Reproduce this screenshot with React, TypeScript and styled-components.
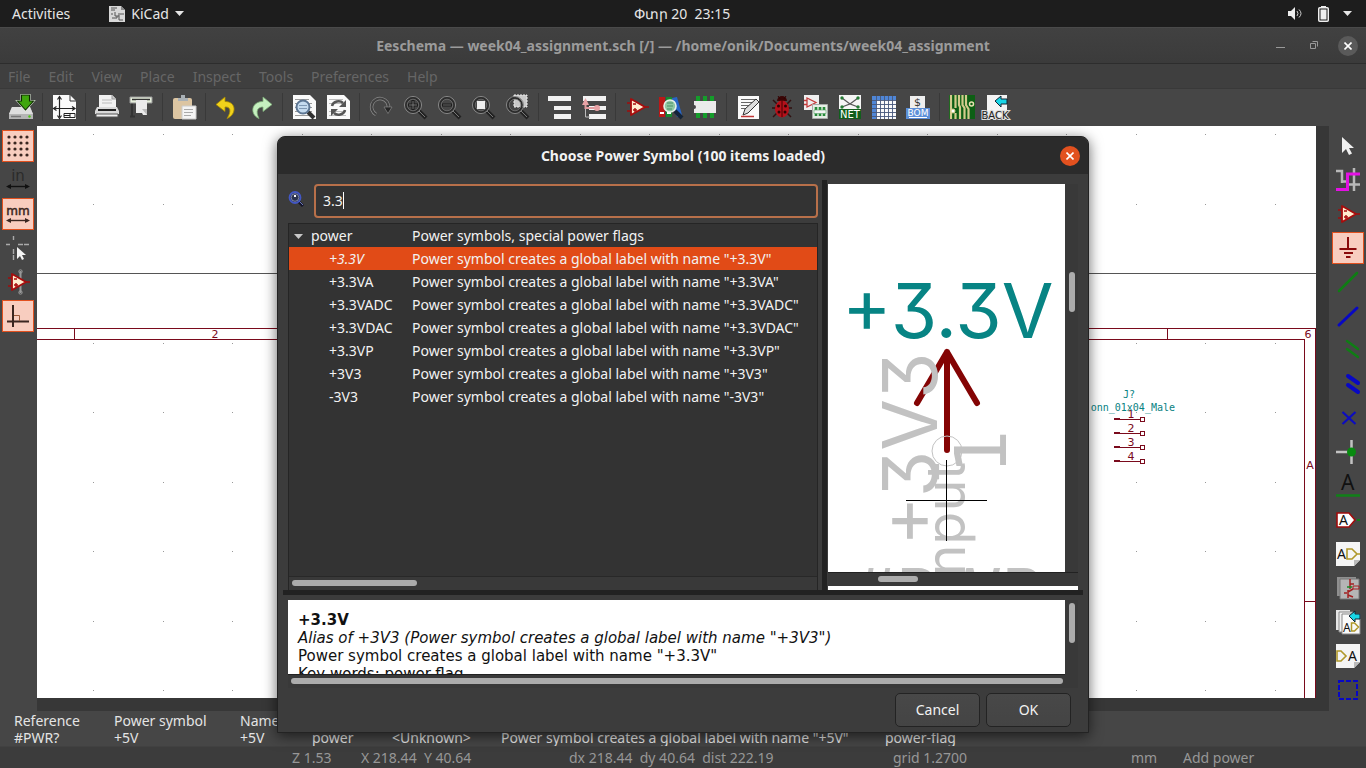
import React from "react";
import styled, { createGlobalStyle } from "styled-components";

const UI = '"Noto Sans", "Open Sans", sans-serif';
const DOC = '"DejaVu Sans", sans-serif';
const MONO = '"DejaVu Sans Mono", monospace';

const Global = createGlobalStyle`
  * { box-sizing: border-box; }
  body { margin: 0; background: #464646; font-family: ${UI}; font-size: 14px; }
  button, input { font: inherit; color: inherit; }
  svg { display: block; }
`;

const Page = styled.div`
  position: relative;
  display: flex;
  flex-direction: column;
  min-height: 100vh;
  overflow: hidden;
`;

/* ---------- desktop bar ---------- */
const DesktopBar = styled.header`
  display: grid;
  grid-template-columns: 1fr auto 1fr;
  align-items: center;
  height: 27px;
  padding: 0 14px 0 12px;
  background: #1d1d1d;
  color: #e6e6e6;
`;
const BarGroup = styled.div<{ $end?: boolean; $gap: number }>`
  display: flex;
  align-items: center;
  gap: ${(p) => p.$gap}px;
  justify-content: ${(p) => (p.$end ? "flex-end" : "flex-start")};
`;
const BarButton = styled.button`
  display: flex;
  align-items: center;
  gap: 6px;
  padding: 0;
  border: 0;
  background: none;
`;

/* ---------- main window chrome ---------- */
const TitleBar = styled.div`
  display: grid;
  grid-template-columns: 1fr auto 1fr;
  align-items: center;
  height: 37px;
  padding: 0 8px;
  background: linear-gradient(#414141, #3b3b3b);
  border-top: 1px solid #4a4a4a;
  border-bottom: 1px solid #2d2d2d;
`;
const WindowTitle = styled.h1`
  grid-column: 2;
  margin: 0;
  font-size: 14px;
  font-weight: 700;
  line-height: 20px;
  color: #9b9b9b;
  white-space: nowrap;
`;
const WindowButtons = styled.div`
  display: flex;
  justify-content: flex-end;
  gap: 14px;
`;
const RoundButton = styled.button<{ $bg?: string }>`
  display: grid;
  place-items: center;
  width: 20px;
  height: 20px;
  padding: 0;
  border: 0;
  border-radius: 50%;
  background: ${(p) => p.$bg || "none"};
`;
const MenuBar = styled.nav`
  display: flex;
  gap: 18px;
  height: 25px;
  padding: 2px 8px 0;
  align-items: center;
  background: #3f3f3f;
  border-bottom: 1px solid #393939;
`;
const MenuItem = styled.button`
  padding: 0;
  border: 0;
  background: none;
  color: #666;
  line-height: 20px;
`;
const TopTools = styled.div`
  display: flex;
  align-items: center;
  height: 37px;
  padding: 0 0 1px 4px;
  background: #464646;
`;
const ToolButton = styled.button`
  display: grid;
  place-items: center;
  flex: none;
  width: 34px;
  height: 34px;
  padding: 0;
  border: 0;
  background: none;
`;
const Separator = styled.span`
  flex: none;
  width: 1px;
  height: 28px;
  margin: 0 4px;
  background: #393939;
`;
const Workspace = styled.main`
  display: flex;
  flex: 1;
  min-height: 585px;
`;
const SideTools = styled.div<{ $inset: number }>`
  display: flex;
  flex-direction: column;
  gap: 2px;
  flex: none;
  width: 37px;
  padding: 4px 0 0 ${(p) => p.$inset}px;
  background: #464646;
`;
const SideButton = styled.button<{ $on?: boolean }>`
  display: grid;
  place-items: center;
  flex: none;
  width: 32px;
  height: 32px;
  padding: 0;
  border: 1px solid ${(p) => (p.$on ? "#e2511f" : "transparent")};
  background: ${(p) => (p.$on ? "#f8cdbf" : "none")};
`;
const CanvasArea = styled.section`
  display: flex;
  flex: 1;
  min-width: 0;
  padding: 0 13px 13px 0;
  background: #373737;
`;
const Sheet = styled.svg`
  flex: 1;
  width: 100%;
  background: #fff;
`;

/* ---------- bottom panels ---------- */
const MessagePanel = styled.table`
  width: 100%;
  table-layout: fixed;
  border-collapse: collapse;
  background: #464646;
  color: #e4e4e4;
  height: 35px;
  th, td {
    padding: 0 0 0 14px;
    height: 17px;
    line-height: 17px;
    font-weight: 400;
    text-align: left;
    white-space: nowrap;
  }
  th {
    height: 18px;
    padding-top: 1px;
  }
`;
const Col = styled.col<{ $w?: number }>`
  width: ${(p) => (p.$w ? p.$w + "px" : "auto")};
`;
const StatusBar = styled.footer`
  display: grid;
  grid-template-columns: 69px 208px 324px 238px 52px 1fr;
  align-items: center;
  height: 22px;
  padding-left: 292px;
  background: #3c3c3c;
  border-top: 1px solid #414141;
  color: #979797;
  white-space: nowrap;
`;

/* ---------- dialog ---------- */
const Overlay = styled.div`
  position: absolute;
  inset: 0;
  display: flex;
  justify-content: center;
  align-items: flex-start;
  padding-top: 136px;
`;
const Dialog = styled.div`
  display: flex;
  flex-direction: column;
  width: 812px;
  border: 1px solid #232323;
  border-radius: 8px 8px 0 0;
  background: #3c3c3c;
  color: #f2f2f2;
  box-shadow: 0 3px 14px rgba(0, 0, 0, 0.6);
`;
const DialogTitle = styled.div`
  display: grid;
  grid-template-columns: 1fr auto 1fr;
  align-items: center;
  justify-items: end;
  height: 37px;
  padding: 0 8px;
  border-radius: 8px 8px 0 0;
  background: #2b2b2b;
  h2 {
    grid-column: 2;
    margin: 0;
    font-size: 14px;
    line-height: 20px;
    font-weight: 700;
  }
`;
const Panes = styled.div`
  display: flex;
  height: 416px;
  margin: 0 4px;
  padding: 6px 6px 0 5px;
`;
const LeftPane = styled.div`
  display: flex;
  flex-direction: column;
  flex: 1;
  min-width: 0;
  padding: 4px 0 0 1px;
`;
const SearchRow = styled.div`
  display: flex;
  align-items: center;
  gap: 10px;
  height: 34px;
  margin-bottom: 5px;
`;
const SearchLabel = styled.label`
  padding-bottom: 4px;
`;
const Field = styled.div`
  position: relative;
  flex: 1;
  height: 34px;
`;
const SearchInput = styled.input`
  width: 100%;
  height: 34px;
  padding: 0 7px 2px;
  border: 2px solid #b8704a;
  border-radius: 4px;
  outline: 0;
  background: #333;
  color: #f2f2f2;
`;
const Caret = styled.span`
  position: absolute;
  left: 29px;
  top: 8px;
  width: 1px;
  height: 17px;
  background: #fff;
`;
const TreeBox = styled.div`
  display: flex;
  flex-direction: column;
  flex: 1;
  border: 1px solid #252525;
  border-bottom: 0;
  background: #333;
  overflow: hidden;
`;
const Tree = styled.table`
  width: 100%;
  table-layout: fixed;
  border-collapse: collapse;
`;
const Row = styled.tr<{ $selected?: boolean }>`
  height: 23px;
  background: ${(p) => (p.$selected ? "#e14b17" : "transparent")};
`;
const Cell = styled.td<{ $indent?: number; $italic?: boolean }>`
  padding: 0 0 0 ${(p) => p.$indent || 0}px;
  line-height: 23px;
  white-space: nowrap;
  font-style: ${(p) => (p.$italic ? "italic" : "normal")};
  svg { display: inline-block; margin-right: 8px; vertical-align: 2px; }
`;
const Track = styled.div<{ $vertical?: boolean; $before: number }>`
  flex: none;
  display: flex;
  align-items: center;
  flex-direction: ${(p) => (p.$vertical ? "column" : "row")};
  ${(p) => (p.$vertical ? "width" : "height")}: 13px;
  padding: ${(p) => (p.$vertical ? `${p.$before}px 0 0` : `0 0 1px ${p.$before}px`)};
  background: #393939;
`;
const Thumb = styled.span<{ $len: number; $vertical?: boolean }>`
  width: ${(p) => (p.$vertical ? 6 : p.$len)}px;
  height: ${(p) => (p.$vertical ? p.$len : 6)}px;
  border-radius: 3px;
  background: #acacac;
`;
const TreeFoot = styled.div`
  margin-top: auto;
  border-top: 1px solid #282828;
`;
const Sash = styled.div`
  flex: none;
  width: 5px;
  margin: 0 1px 0 4px;
  background: #222;
`;
const RightPane = styled.div`
  display: flex;
  flex-direction: column;
  flex: none;
  width: 250px;
  padding-top: 4px;
`;
const Preview = styled.div`
  display: flex;
  height: 389px;
  border-bottom: 1px solid #222;
`;
const PreviewDrawing = styled.svg`
  flex: 1;
  background: #fff;
`;
const FootprintStrip = styled.div`
  flex: 1;
  background: #fff;
`;
const WideSash = styled.div`
  height: 5px;
  margin: 0 5px;
  background: #222;
`;
const DetailsBox = styled.div`
  margin: 5px 10px 0;
`;
const DetailsRow = styled.div`
  display: flex;
  height: 75px;
`;
const Details = styled.div`
  flex: 1;
  padding: 11px 10px 0;
  overflow: hidden;
  background: #fff;
  color: #111;
  font-family: ${DOC};
  font-size: 15px;
  line-height: 18px;
  white-space: nowrap;
  border-bottom: 1px solid #222;
  p { margin: 0; }
`;
const Actions = styled.div`
  display: flex;
  justify-content: flex-end;
  gap: 6px;
  padding: 5px 17px 5px;
`;
const ActionButton = styled.button`
  width: 85px;
  height: 34px;
  padding: 0 0 2px;
  border: 1px solid #232323;
  border-radius: 5px;
  background: linear-gradient(#484848, #444);
`;

/* ---------- icons ---------- */
const IconSvg = styled.svg`
  overflow: visible;
`;
const Icon = ({ children }: { children: React.ReactNode }) => (
  <IconSvg width="24" height="24" viewBox="0 0 24 24" fill="none" aria-hidden="true">{children}</IconSvg>
);
const SheetShape = () => <path d="M1 0h17l6 6v18H1z" fill="#fafafa" />;
const OpAmp = () => (
  <g>
    <path d="M2 8h4M2 16h4M20 12h4" stroke="#a00d0d" strokeWidth="1.600" />
    <path d="M6 4v16l14-8z" fill="#ffedcf" stroke="#a80c0c" strokeWidth="1.800" strokeLinejoin="round" />
    <path d="M8 9h3M8 15h4M10 13v4" stroke="#a80c0c" strokeWidth="1.400" />
  </g>
);
const Lens = ({ children }: { children?: React.ReactNode }) => (
  <g>
    <path d="M16 16l7 7" stroke="#222" strokeWidth="4" />
    <path d="M16 16l6 6" stroke="#777" strokeWidth="1" />
    <circle cx="10" cy="10" r="8.500" stroke="#8a8a8a" strokeWidth="1" />
    <circle cx="10" cy="10" r="7" stroke="#2c2c2c" strokeWidth="1.800" />
    <circle cx="10" cy="10" r="5.800" stroke="#777" strokeWidth=".7" />
    {children}
  </g>
);
const GlyphA = ({ x, y, size = 14, color = "#111" }: { x: number; y: number; size?: number; color?: string }) => (
  <text x={x} y={y} fontSize={size} fontFamily={UI} fill={color}>A</text>
);

const icons: Record<string, React.ReactNode> = {
  save: (
    <g>
      <path d="M3 12h18l3 7v5H0v-5z" fill="#b5b5b5" />
      <path d="M3 12h18l3 7H0z" fill="#dedede" />
      <path d="M2 21.500h10" stroke="#777" strokeWidth="1.500" />
      <circle cx="20.500" cy="21.500" r="1.200" fill="#4cc417" />
      <path d="M12.500 0h8v6h4l-8 9-8-9h4z" fill="#3fa60c" stroke="#e8f5e0" strokeWidth="2" />
      <path d="M12.500 0h8v6h4l-8 9-8-9h4z" fill="#3fa60c" stroke="#0d2a00" strokeWidth="1.100" />
    </g>
  ),
  page: (
    <g>
      <SheetShape />
      <path d="M18 0v6h6" stroke="#333" strokeWidth="1" />
      <path d="M7.500 2v20M2 13.500h20M5.500 4.500l2-3 2 3M5.500 20.500l2 3 2-3M4.500 11.500l-3 2 3 2M20 11.500l3 2-3 2" stroke="#222" strokeWidth="1.200" />
      <path d="M12 18.500h11v4H12zM18 18.500v4M12 20.500h6" stroke="#222" />
    </g>
  ),
  print: (
    <g>
      <path d="M4 0h13l4 4v9H4z" fill="#f1f1f1" />
      <path d="M17 0v4h4" stroke="#999" fill="#ccc" />
      <path d="M7 5h10M7 8h10" stroke="#bbb" />
      <path d="M2 12h20l2 4v3H0v-3z" fill="#d9d9d9" />
      <path d="M3 15h18" stroke="#222" strokeWidth="2" />
      <path d="M1 19h22v3H1z" fill="#eee" stroke="#555" />
    </g>
  ),
  plot: (
    <g>
      <path d="M3 7v14M1 21.500h5" stroke="#333" strokeWidth="2" />
      <path d="M1 2h22v6H1z" fill="#e6efdc" stroke="#999" />
      <path d="M3 4.500h18" stroke="#333" strokeWidth="1.500" />
      <path d="M7 5h11v15h-4l-1-2H7z" fill="#ebebeb" />
      <path d="M13 14h5v6z" fill="#bbb" />
    </g>
  ),
  paste: (
    <g>
      <rect x="1" y="3" width="19" height="21" rx="2" fill="#dcc5a2" />
      <path d="M6 3h3V0h4v3h3v3H6z" fill="#a9b0b5" />
      <path d="M10 11h14v13H10z" fill="#f4f4f4" stroke="#ccc" />
      <path d="M12 14.500h9M12 17.500h9M12 20.500h7" stroke="#aaa" />
    </g>
  ),
  undo: <path d="M10 2L1 9.500l9 7V12c5-.5 7 3.500 2 11.500 10-4 9.500-17-2-17z" fill="#f1d21b" stroke="#a98c00" strokeWidth=".8" />,
  redo: <path d="M14 2l9 7.500-9 7V12c-5 0-8 3.500-4 11.500-9.500-4-8-17 4-17z" fill="#c6f0c0" stroke="#7fb07a" strokeWidth=".8" />,
  find: (
    <g>
      <SheetShape />
      <path d="M3 4.500h14M3 8.500h17M3 12.500h17M3 16.500h17M3 20.500h17" stroke="#999" />
      <path d="M16 17l6 6" stroke="#333" strokeWidth="4" />
      <circle cx="11" cy="12" r="6.500" fill="#c5dbef" stroke="#5d7693" strokeWidth="2" />
      <path d="M7 10.500h8M7 13.500h8" stroke="#7f99b5" />
    </g>
  ),
  replace: (
    <g>
      <SheetShape />
      <path d="M3 4.500h14M3 8.500h17M3 16.500h17M3 20.500h17" stroke="#bbb" />
      <path d="M6 11c1-5 8-6 11-3M19 15c-1 5-8 6-11 3" stroke="#555" strokeWidth="2.500" />
      <path d="M20 5v7h-7zM5 21v-7h7z" fill="#555" />
    </g>
  ),
  refresh: (
    <g>
      <path d="M7 19.500A8.500 8.500 0 1 1 19.500 13" stroke="#8d8d8d" strokeWidth="3.400" />
      <path d="M7 19.500A8.500 8.500 0 1 1 19.500 13" stroke="#404040" strokeWidth="2" />
      <path d="M15 12h8l-4 6.500z" fill="#262626" stroke="#888" strokeWidth=".7" />
    </g>
  ),
  zoomIn: <Lens><path d="M10 5v10M5 10h10" stroke="#1d1d1d" strokeWidth="3" /><path d="M10 6v8M6 10h8" stroke="#888" strokeWidth=".8" /></Lens>,
  zoomOut: <Lens><path d="M5 10h10" stroke="#1d1d1d" strokeWidth="3" /><path d="M6 10h8" stroke="#777" strokeWidth=".8" /></Lens>,
  zoomFit: <Lens><path d="M6 6h8v8H6z" fill="#eee" /></Lens>,
  zoomArea: (
    <g>
      <path d="M9 0h13v12H9z" fill="#c9c9c9" stroke="#eee" strokeDasharray="2 1" />
      <Lens />
    </g>
  ),
  hierarchy: <path d="M0 1h23v5H0zM6 11h17v4H6zM6 19h17v5H6z" fill="#f2f2f2" />,
  leave: (
    <g>
      <path d="M1 1h23v5H1zM7 11h17v4H7zM7 19h17v5H7z" fill="#f2f2f2" />
      <path d="M3.500 8v14H8M4 13h12" stroke="#bbb" />
      <path d="M3.500 5v8H15" stroke="#e09a9e" strokeWidth="2" />
      <path d="M3.500 3L0 10h7z" fill="#e8a3a6" /><circle cx="15" cy="13" r="3" fill="#e8a3a6" />
    </g>
  ),
  opamp: <OpAmp />,
  library: (
    <g>
      <path d="M0 2h6v20H0z" fill="#bb1717" /><path d="M7 2h6v20H7z" fill="#148a2d" />
      <path d="M13 3l5-1 5 18-5 2z" fill="#2766c9" />
      <path d="M1 18h4M8 18h4" stroke="#fff" strokeWidth="2" />
      <path d="M16 16l7 7" stroke="#142438" strokeWidth="4" />
      <circle cx="11" cy="11" r="6" fill="#8fc7a2" stroke="#e5efe8" strokeWidth="1.600" />
      <path d="M8 8h6M8 11h6M8 14h5" stroke="#4b8f68" />
    </g>
  ),
  footprint: (
    <g>
      <path d="M3 1h4v5H3zM10 1h4v5h-4zM17 1h4v5h-4zM3 18h4v5H3zM10 18h4v5h-4zM17 18h4v5h-4z" fill="#159d2b" />
      <path d="M1 6h22v12H1v-4a2 2 0 0 0 0-4z" fill="#ebebeb" />
    </g>
  ),
  annotate: (
    <g>
      <path d="M2 1h21v23H2z" fill="#fafafa" />
      <path d="M5 4.500h14M5 7.500h12M5 10.500h10M5 13.500h7" stroke="#666" />
      <path d="M7 20l2-6L20 4l3 3-11 11z" fill="#ddd" stroke="#333" />
      <path d="M5 21.500h13" stroke="#c23535" strokeWidth="1.500" />
    </g>
  ),
  erc: (
    <g>
      <path d="M3 5l4 4M21 5l-4 4M2 13h4M22 13h-4M3 22l4-4M21 22l-4-4" stroke="#301010" strokeWidth="1.500" />
      <path d="M7 6a5 5 0 0 1 10 0z" fill="#3a0505" /><path d="M8 1l2 3M16 1l-2 3" stroke="#300" />
      <ellipse cx="12" cy="14" rx="7" ry="8.500" fill="#b5101a" />
      <path d="M12 5v17" stroke="#400" />
      <circle cx="8.500" cy="11" r="1.500" fill="#2b0303" /><circle cx="15.500" cy="11" r="1.500" fill="#2b0303" />
      <circle cx="9" cy="17" r="1.500" fill="#2b0303" /><circle cx="15" cy="17" r="1.500" fill="#2b0303" />
    </g>
  ),
  assign: (
    <g>
      <path d="M0 0h15v15H0z" fill="#eee" />
      <path d="M3 3v9l9-4.500zM0 5.500h3M0 9.500h3" stroke="#c43b3b" strokeWidth="1.300" />
      <path d="M8.500 9.500h15v14h-15z" fill="#e5eee5" stroke="#aaa" />
      <path d="M12 12v9M16 12v9M20 12v9" stroke="#258a38" strokeWidth="2.600" />
      <path d="M10 15h12v3.500H10z" fill="#f4f4f4" stroke="#5aa568" strokeWidth=".6" />
    </g>
  ),
  net: (
    <g>
      <path d="M1 0h22v14H1z" fill="#f5f5f5" /><path d="M1 14h22v10H1z" fill="#115e1c" />
      <path d="M4 3l8 6 8-6M4 12l8-3 8 3" stroke="#555" strokeWidth="1.200" />
      <g fill="#247a34"><circle cx="4" cy="3" r="1.700" /><circle cx="20" cy="3" r="1.700" /><circle cx="4" cy="12" r="1.700" /><circle cx="20" cy="12" r="1.700" /></g>
      <text x="12" y="22.500" fontSize="10" fontFamily={DOC} textAnchor="middle" fill="#fff">NET</text>
    </g>
  ),
  grid: (
    <g>
      <path d="M0 1h24v23H0z" fill="#fafafa" />
      <path d="M0 1h24v4H0zM0 1h4v23H0z" fill="#4f86d6" />
      <path d="M4.500 1v23M8.500 1v23M12.500 1v23M16.500 1v23M20.500 1v23M0 5.500h24M0 9.500h24M0 13.500h24M0 17.500h24M0 21.500h24" stroke="#46577a" strokeWidth=".9" />
    </g>
  ),
  bom: (
    <g>
      <path d="M4 1h15v12H4z" fill="#efefef" /><path d="M0 13h24v11H0z" fill="#5d8fd8" />
      <text x="11.500" y="11" fontSize="11" fontFamily={DOC} textAnchor="middle" fill="#333">$</text>
      <text x="12" y="21" fontSize="9" fontFamily={DOC} textAnchor="middle" fill="#fff">BOM</text>
      <path d="M3 22.500h18" stroke="#fff" />
    </g>
  ),
  pcb: (
    <g>
      <path d="M0 0h26v24H0z" fill="#0d5f14" />
      <path d="M2 24V0M6.500 24v-6M6.500 13V0M11 24V12l-1-2V0M15.500 24V13l-2-3V0M19.500 24V14l-2.500-4V0" stroke="#d3cb8c" strokeWidth="2.200" />
      <circle cx="4" cy="16" r="2" fill="#fff" stroke="#d9cf90" /><circle cx="22.500" cy="9" r="2" fill="#0d5f14" stroke="#e8e0b0" strokeWidth="1.500" />
    </g>
  ),
  back: (
    <g>
      <path d="M4 0h20v24H4z" fill="#f4f4f4" />
      <path d="M12 6l6-5v3h6v5h-6v3z" fill="#19d5e6" stroke="#123" />
      <text x="12" y="24" fontSize="10" fontFamily={DOC} textAnchor="middle" fill="#222" stroke="#ddd" strokeWidth="2" paintOrder="stroke">BACK</text>
    </g>
  ),
  dots: (
    <g fill="#3a2620">
      {[3, 9, 15, 21].map((y) => [3, 9, 15, 21].map((x) => <circle key={x + "-" + y} cx={x} cy={y} r="1.600" />))}
    </g>
  ),
  inch: (
    <g>
      <text x="12" y="13" fontSize="15" fontFamily={DOC} textAnchor="middle" fill="#2b2b2b">in</text>
      <path d="M2 18.500h20" stroke="#111" strokeWidth="1.400" /><path d="M0 18.500l5-2.500v5zM24 18.500l-5-2.500v5z" fill="#111" />
    </g>
  ),
  mm: (
    <g>
      <text x="12" y="13" fontSize="12" fontFamily={DOC} textAnchor="middle" fill="#3a2620" stroke="#3a2620" strokeWidth=".5">mm</text>
      <path d="M2 18.500h20" stroke="#3a2620" strokeWidth="1.400" /><path d="M0 18.500l5-2.500v5zM24 18.500l-5-2.500v5z" fill="#3a2620" />
    </g>
  ),
  cursor: (
    <g>
      <path d="M0 8.500h4M12 8.500h12M7.500 0v4M7.500 13v11" stroke="#aaa" strokeWidth="1.400" strokeDasharray="5 1" />
      <path d="M11 11v12l3-3 2 4 2-1-2-4h4z" fill="#f4f4f4" />
    </g>
  ),
  hidden: (
    <g>
      <path d="M14.500 1v22" stroke="#999" strokeWidth="2" />
      <OpAmp />
      <circle cx="14.500" cy="1.500" r="1.700" stroke="#999" /><circle cx="14.500" cy="22.500" r="1.700" stroke="#999" />
    </g>
  ),
  ortho: (
    <g>
      <path d="M7 1v22M1 17.500h22" stroke="#3a2620" strokeWidth="2" />
      <path d="M8 11.500h5.500V17" stroke="#9b5a3a" />
    </g>
  ),
  arrow: <path d="M6 3v16l4-4 3 6 3-1.500-3-5.500h5z" fill="#f0f0f0" />,
  highlight: (
    <g>
      <path d="M0 3h6v12M18 0v23M11 16.500h13M6 13.500h4" stroke="#b8b8b8" strokeWidth="2.500" />
      <path d="M0 21.500h11.500V6H24" stroke="#e411e4" strokeWidth="3" />
    </g>
  ),
  ground: <path d="M12 1v11M3.500 13h17M8 17h9M10 21h4.500" stroke="#8a0a0a" strokeWidth="2" />,
  wire: <path d="M3 21L21 3" stroke="#0f7d14" strokeWidth="2.500" strokeLinecap="round" />,
  bus: <path d="M3 21L21 4" stroke="#0808c4" strokeWidth="3" strokeLinecap="round" />,
  wireEntry: <path d="M11 3l11 8M11 11l11 8" stroke="#0f7d14" strokeWidth="2.500" strokeLinecap="round" />,
  busEntry: <path d="M12 4l10 7M12 13l10 7" stroke="#0808c4" strokeWidth="4" strokeLinecap="round" />,
  noConnect: <path d="M6.500 6l13 12M19.500 6l-13 12" stroke="#0c0cc0" strokeWidth="2.200" />,
  junction: (
    <g>
      <path d="M15.500 0v24M0 12h13" stroke="#c2c2c2" strokeWidth="2.500" />
      <circle cx="15.500" cy="12" r="4.500" fill="#088a10" />
    </g>
  ),
  netLabel: (<g><GlyphA x={5} y={16} size={21} /><path d="M0 21.500h24" stroke="#108018" strokeWidth="2.500" /></g>),
  globalLabel: (<g><path d="M1 5h12l6 7-6 7H1z" fill="#fff" stroke="#a00d0d" strokeWidth="1.600" /><path d="M21 12h3" stroke="#117a18" strokeWidth="2" /><GlyphA x={3} y={17} size={14} /></g>),
  hierLabel: (<g><path d="M0 0h24v18l-6 6H0z" fill="#f5f5f5" /><path d="M18 24v-6h6z" fill="#bbb" /><GlyphA x={1} y={17} /><path d="M11 7h5l5 5-5 5h-5zM21 12h3" stroke="#b0982a" strokeWidth="1.600" /></g>),
  sheet: (
    <g>
      <path d="M1 1h19v19H1z" fill="#8f8f8f" /><path d="M4 3h19v20H4z" fill="#b5b5b5" stroke="#777" />
      <path d="M14 3v7M14 8h4M8 17h3M12 14v8M12 16l5-3M12 19l5 2M14 13v-3" stroke="#a32020" strokeWidth="1.500" />
      <path d="M17 10h6v3h-6z" stroke="#a32020" /><path d="M11 11h5" stroke="#178a26" strokeWidth="1.500" />
    </g>
  ),
  importLabel: (
    <g>
      <path d="M0 0h14v20H0z" fill="#e5e5e5" /><path d="M3 2h14v20H3z" fill="#f0f0f0" stroke="#888" /><path d="M6 4h18v20H6z" fill="#fafafa" stroke="#888" />
      <GlyphA x={7} y={22} size={12} />
      <path d="M15.500 13h3l4 4-4 4h-3z" stroke="#b0982a" strokeWidth="1.500" />
      <path d="M13 6l6-5v3h5v5h-5v3z" fill="#19d5e6" stroke="#123" />
    </g>
  ),
  sheetPin: (<g><path d="M0 0h24v18l-6 6H0z" fill="#f5f5f5" /><path d="M18 24v-6h6z" fill="#bbb" /><path d="M1 7h4l5 5-5 5H1z" stroke="#b0982a" strokeWidth="1.600" /><GlyphA x={12} y={17} /></g>),
  graphic: <path d="M3 3h18v18H3z" stroke="#0808c4" strokeWidth="2" strokeDasharray="5 2" />,
};

const topTools: string[][] = [
  ["save"], ["page"], ["print", "plot"], ["paste"], ["undo", "redo"], ["find", "replace"],
  ["refresh", "zoomIn", "zoomOut", "zoomFit", "zoomArea"], ["hierarchy", "leave"],
  ["opamp", "library", "footprint"], ["annotate", "erc", "assign", "net", "grid", "bom"], ["pcb", "back"],
];
const leftTools = ["dots", "inch", "mm", "cursor", "hidden", "ortho"];
const leftActive = ["dots", "mm", "ortho"];
const rightTools = [
  "arrow", "highlight", "opamp", "ground", "wire", "bus", "wireEntry", "busEntry", "noConnect",
  "junction", "netLabel", "globalLabel", "hierLabel", "sheet", "importLabel", "sheetPin", "graphic",
];
const menus = ["File", "Edit", "View", "Place", "Inspect", "Tools", "Preferences", "Help"];
const symbols = ["+3.3V", "+3.3VA", "+3.3VADC", "+3.3VDAC", "+3.3VP", "+3V3", "-3V3"];

/* Schematic sheet, drawn in sheet coordinates */
const Schematic = () => {
  const xs = Array.from({ length: 18 }, (_, i) => Math.round(56 + i * 69.5));
  const ys = [8, 78, 217, 286, 356, 425, 495, 564];
  return (
    <Sheet viewBox="0 0 1279 572" preserveAspectRatio="xMinYMin slice" shapeRendering="crispEdges" aria-label="Schematic">
      {ys.map((y) => xs.map((x) => <rect key={x + "-" + y} x={x} y={y} width="1" height="1" fill="#999" />))}
      <path d="M0 147.500h1279" stroke="#555" />
      <path d="M0 202.500h1278.500V572M0 213.500h1267.500V572M37.500 202v11M1130.500 202v11M1267 475.500h11" stroke="#7a0a1c" fill="none" />
      <g fontFamily={DOC} fontSize="11" fill="#7a0a1c" textAnchor="middle">
        <text x="178" y="212">2</text>
        <text x="1271" y="212">6</text>
        <text x="1273" y="343">A</text>
        {[0, 1, 2, 3].map((i) => (
          <g key={i}>
            <text x="1094" y={292 + i * 14}>{i + 1}</text>
            <path d={`M1077 ${293.5 + i * 14}h26`} stroke="#7a0a1c" />
            <path d={`M1077 ${293 + i * 14}h6`} stroke="#7a0a1c" strokeWidth="2" />
            <rect x="1103.500" y={291.5 + i * 14} width="4" height="4" fill="#fff" stroke="#7a0a1c" />
          </g>
        ))}
      </g>
      <g fontFamily={MONO} fontSize="10" fill="#088282">
        <text x="1086" y="272">J?</text>
        <text x="1138" y="285" textAnchor="end">onn_01x04_Male</text>
      </g>
    </Sheet>
  );
};

const StrokeText = styled.g`
  font-family: Inter, sans-serif;
  font-feature-settings: "cv09";
`;

const SymbolPreview = () => (
  <PreviewDrawing viewBox="0 0 237 388" preserveAspectRatio="xMidYMid slice" aria-label="Symbol preview">
    <StrokeText fontSize="75">
      <text x="14" y="154" fill="#078484">+3.3V</text>
    </StrokeText>
    <path d="M119 266V168M89 219l30-51 30 51" stroke="#840404" strokeWidth="6" fill="none" strokeLinecap="round" strokeLinejoin="round" />
    <StrokeText fill="#c2c2c2">
      <text transform="translate(109 362) rotate(-90)" fontSize="75">+3V3</text>
      <text transform="translate(137 282) rotate(-90)" fontSize="54" textAnchor="end" x="4">Power input</text>
      <text x="27" y="431" fontSize="65">#PWR</text>
    </StrokeText>
    <text transform="translate(178 267) rotate(-90)" fontSize="72" fontFamily={DOC} textAnchor="middle" fill="#c2c2c2">1</text>
    <circle cx="119" cy="267" r="15" stroke="#c2c2c2" fill="none" />
    <path d="M78 316.500h81M118.500 276v81" stroke="#000" />
  </PreviewDrawing>
);

const CloseGlyph = () => (
  <svg width="8" height="8" viewBox="0 0 8 8" aria-hidden="true"><path d="M.5.5l7 7M7.500.5l-7 7" stroke="#fff" strokeWidth="1.600" /></svg>
);
const Down = ({ color = "#e6e6e6" }: { color?: string }) => (
  <svg width="9" height="5" viewBox="0 0 9 5" aria-hidden="true"><path d="M0 0h9L4.500 5z" fill={color} /></svg>
);

export default function App() {
  return (
    <>
      <Global />
      <Page>
        <DesktopBar>
          <BarGroup $gap={39}>
            <BarButton>Activities</BarButton>
            <BarButton>
              <svg width="16" height="16" viewBox="0 0 16 16" aria-hidden="true">
                <path d="M0 0h12l4 4v12H0z" fill="#d8d8d8" />
                <path d="M12 0v4h4z" fill="#888" />
                <path d="M2 2h6M2 4h4M6 6v4h4V7M3 12h5v-2M10 10v4h4M11 8h4M2 8h2" stroke="#555" fill="none" />
              </svg>
              KiCad
              <Down />
            </BarButton>
          </BarGroup>
          <span>Փտր 20&nbsp; 23:15</span>
          <BarGroup $end $gap={14}>
            <svg width="16" height="14" viewBox="0 0 16 14" aria-hidden="true">
              <path d="M0 4h3l4-4v13L3 9H0z" fill="#eee" />
              <path d="M9 4q2 2.500 0 5M11 2.500q4 4 0 8" stroke="#ccc" fill="none" />
            </svg>
            <svg width="11" height="16" viewBox="0 0 11 16" aria-hidden="true">
              <path d="M3 0h5v2H3z" fill="#eee" /><rect x=".75" y="1.750" width="9.500" height="13.500" rx="1" stroke="#eee" strokeWidth="1.500" fill="none" /><path d="M2.500 3.500h6v10h-6z" fill="#eee" />
            </svg>
            <Down />
          </BarGroup>
        </DesktopBar>

        <TitleBar>
          <WindowTitle>Eeschema — week04_assignment.sch [/] — /home/onik/Documents/week04_assignment</WindowTitle>
          <WindowButtons>
            <RoundButton aria-label="Minimize"><svg width="9" height="9" viewBox="0 0 9 9"><path d="M0 6.500h9" stroke="#999" /></svg></RoundButton>
            <RoundButton aria-label="Restore"><svg width="9" height="9" viewBox="0 0 9 9" fill="none"><path d="M.5 2.500h5v5h-5zM2.500.5h5v5" stroke="#999" /></svg></RoundButton>
            <RoundButton aria-label="Close" $bg="#5a5a5a"><CloseGlyph /></RoundButton>
          </WindowButtons>
        </TitleBar>

        <MenuBar>{menus.map((m) => <MenuItem key={m}>{m}</MenuItem>)}</MenuBar>

        <TopTools>
          {topTools.map((group, i) => (
            <React.Fragment key={i}>
              {i > 0 && <Separator />}
              {group.map((name) => <ToolButton key={name} aria-label={name}><Icon>{icons[name]}</Icon></ToolButton>)}
            </React.Fragment>
          ))}
        </TopTools>

        <Workspace>
          <SideTools $inset={2}>
            {leftTools.map((name) => (
              <SideButton key={name} aria-label={name} $on={leftActive.includes(name)}><Icon>{icons[name]}</Icon></SideButton>
            ))}
          </SideTools>
          <CanvasArea><Schematic /></CanvasArea>
          <SideTools $inset={3}>
            {rightTools.map((name) => (
              <SideButton key={name} aria-label={name} $on={name === "ground"}><Icon>{icons[name]}</Icon></SideButton>
            ))}
          </SideTools>
        </Workspace>

        <MessagePanel>
          <colgroup><Col $w={100} /><Col $w={126} /><Col $w={72} /><Col $w={80} /><Col $w={109} /><Col $w={384} /><Col /></colgroup>
          <thead><tr><th>Reference</th><th>Power symbol</th><th>Name</th><th /><th /><th /><th /></tr></thead>
          <tbody><tr><td>#PWR?</td><td>+5V</td><td>+5V</td><td>power</td><td>&lt;Unknown&gt;</td><td>Power symbol creates a global label with name "+5V"</td><td>power-flag</td></tr></tbody>
        </MessagePanel>
        <StatusBar>
          <span>Z 1.53</span><span>X 218.44&nbsp; Y 40.64</span><span>dx 218.44&nbsp; dy 40.64&nbsp; dist 222.19</span><span>grid 1.2700</span><span>mm</span><span>Add power</span>
        </StatusBar>

        <Overlay>
          <Dialog role="dialog" aria-labelledby="chooser-title">
            <DialogTitle>
              <h2 id="chooser-title">Choose Power Symbol (100 items loaded)</h2>
              <RoundButton aria-label="Close dialog" $bg="#e2511f"><CloseGlyph /></RoundButton>
            </DialogTitle>
            <Panes>
              <LeftPane>
                <SearchRow>
                  <SearchLabel htmlFor="filter" aria-label="Filter">
                    <svg width="16" height="16" viewBox="0 0 16 16" fill="none" aria-hidden="true">
                      <path d="M10 10l5 5" stroke="#14142a" strokeWidth="3" />
                      <path d="M11 10l4 4" stroke="#6a78b8" strokeWidth="1" />
                      <circle cx="7" cy="6.500" r="5.500" fill="#2c3450" stroke="#4257c4" strokeWidth="1.800" />
                      <circle cx="7" cy="6.500" r="3.800" stroke="#8b96b8" strokeWidth=".8" />
                      <path d="M6 5h2" stroke="#fff" strokeWidth="2" />
                    </svg>
                  </SearchLabel>
                  <Field><SearchInput id="filter" defaultValue="3.3" /><Caret /></Field>
                </SearchRow>
                <TreeBox>
                  <Tree>
                    <colgroup><Col $w={123} /><Col /></colgroup>
                    <tbody>
                      <Row><Cell $indent={5}><Down color="#c8c8c8" />power</Cell><Cell>Power symbols, special power flags</Cell></Row>
                      {symbols.map((s, i) => (
                        <Row key={s} $selected={i === 0}>
                          <Cell $indent={40} $italic={i === 0}>{s}</Cell>
                          <Cell>Power symbol creates a global label with name "{s}"</Cell>
                        </Row>
                      ))}
                    </tbody>
                  </Tree>
                  <TreeFoot><Track $before={3}><Thumb $len={125} /></Track></TreeFoot>
                </TreeBox>
              </LeftPane>
              <Sash />
              <RightPane>
                <Preview>
                  <SymbolPreview />
                  <Track $vertical $before={88}><Thumb $vertical $len={40} /></Track>
                </Preview>
                <Track $before={50}><Thumb $len={40} /></Track>
                <FootprintStrip />
              </RightPane>
            </Panes>
            <WideSash />
            <DetailsBox>
              <DetailsRow>
                <Details>
                  <p><b>+3.3V</b></p>
                  <p><i>Alias of +3V3 (Power symbol creates a global label with name "+3V3")</i></p>
                  <p>Power symbol creates a global label with name "+3.3V"</p>
                  <p>Key words: power-flag</p>
                </Details>
                <Track $vertical $before={3}><Thumb $vertical $len={40} /></Track>
              </DetailsRow>
              <Track $before={3}><Thumb $len={772} /></Track>
            </DetailsBox>
            <Actions>
              <ActionButton>Cancel</ActionButton>
              <ActionButton>OK</ActionButton>
            </Actions>
          </Dialog>
        </Overlay>
      </Page>
    </>
  );
}
